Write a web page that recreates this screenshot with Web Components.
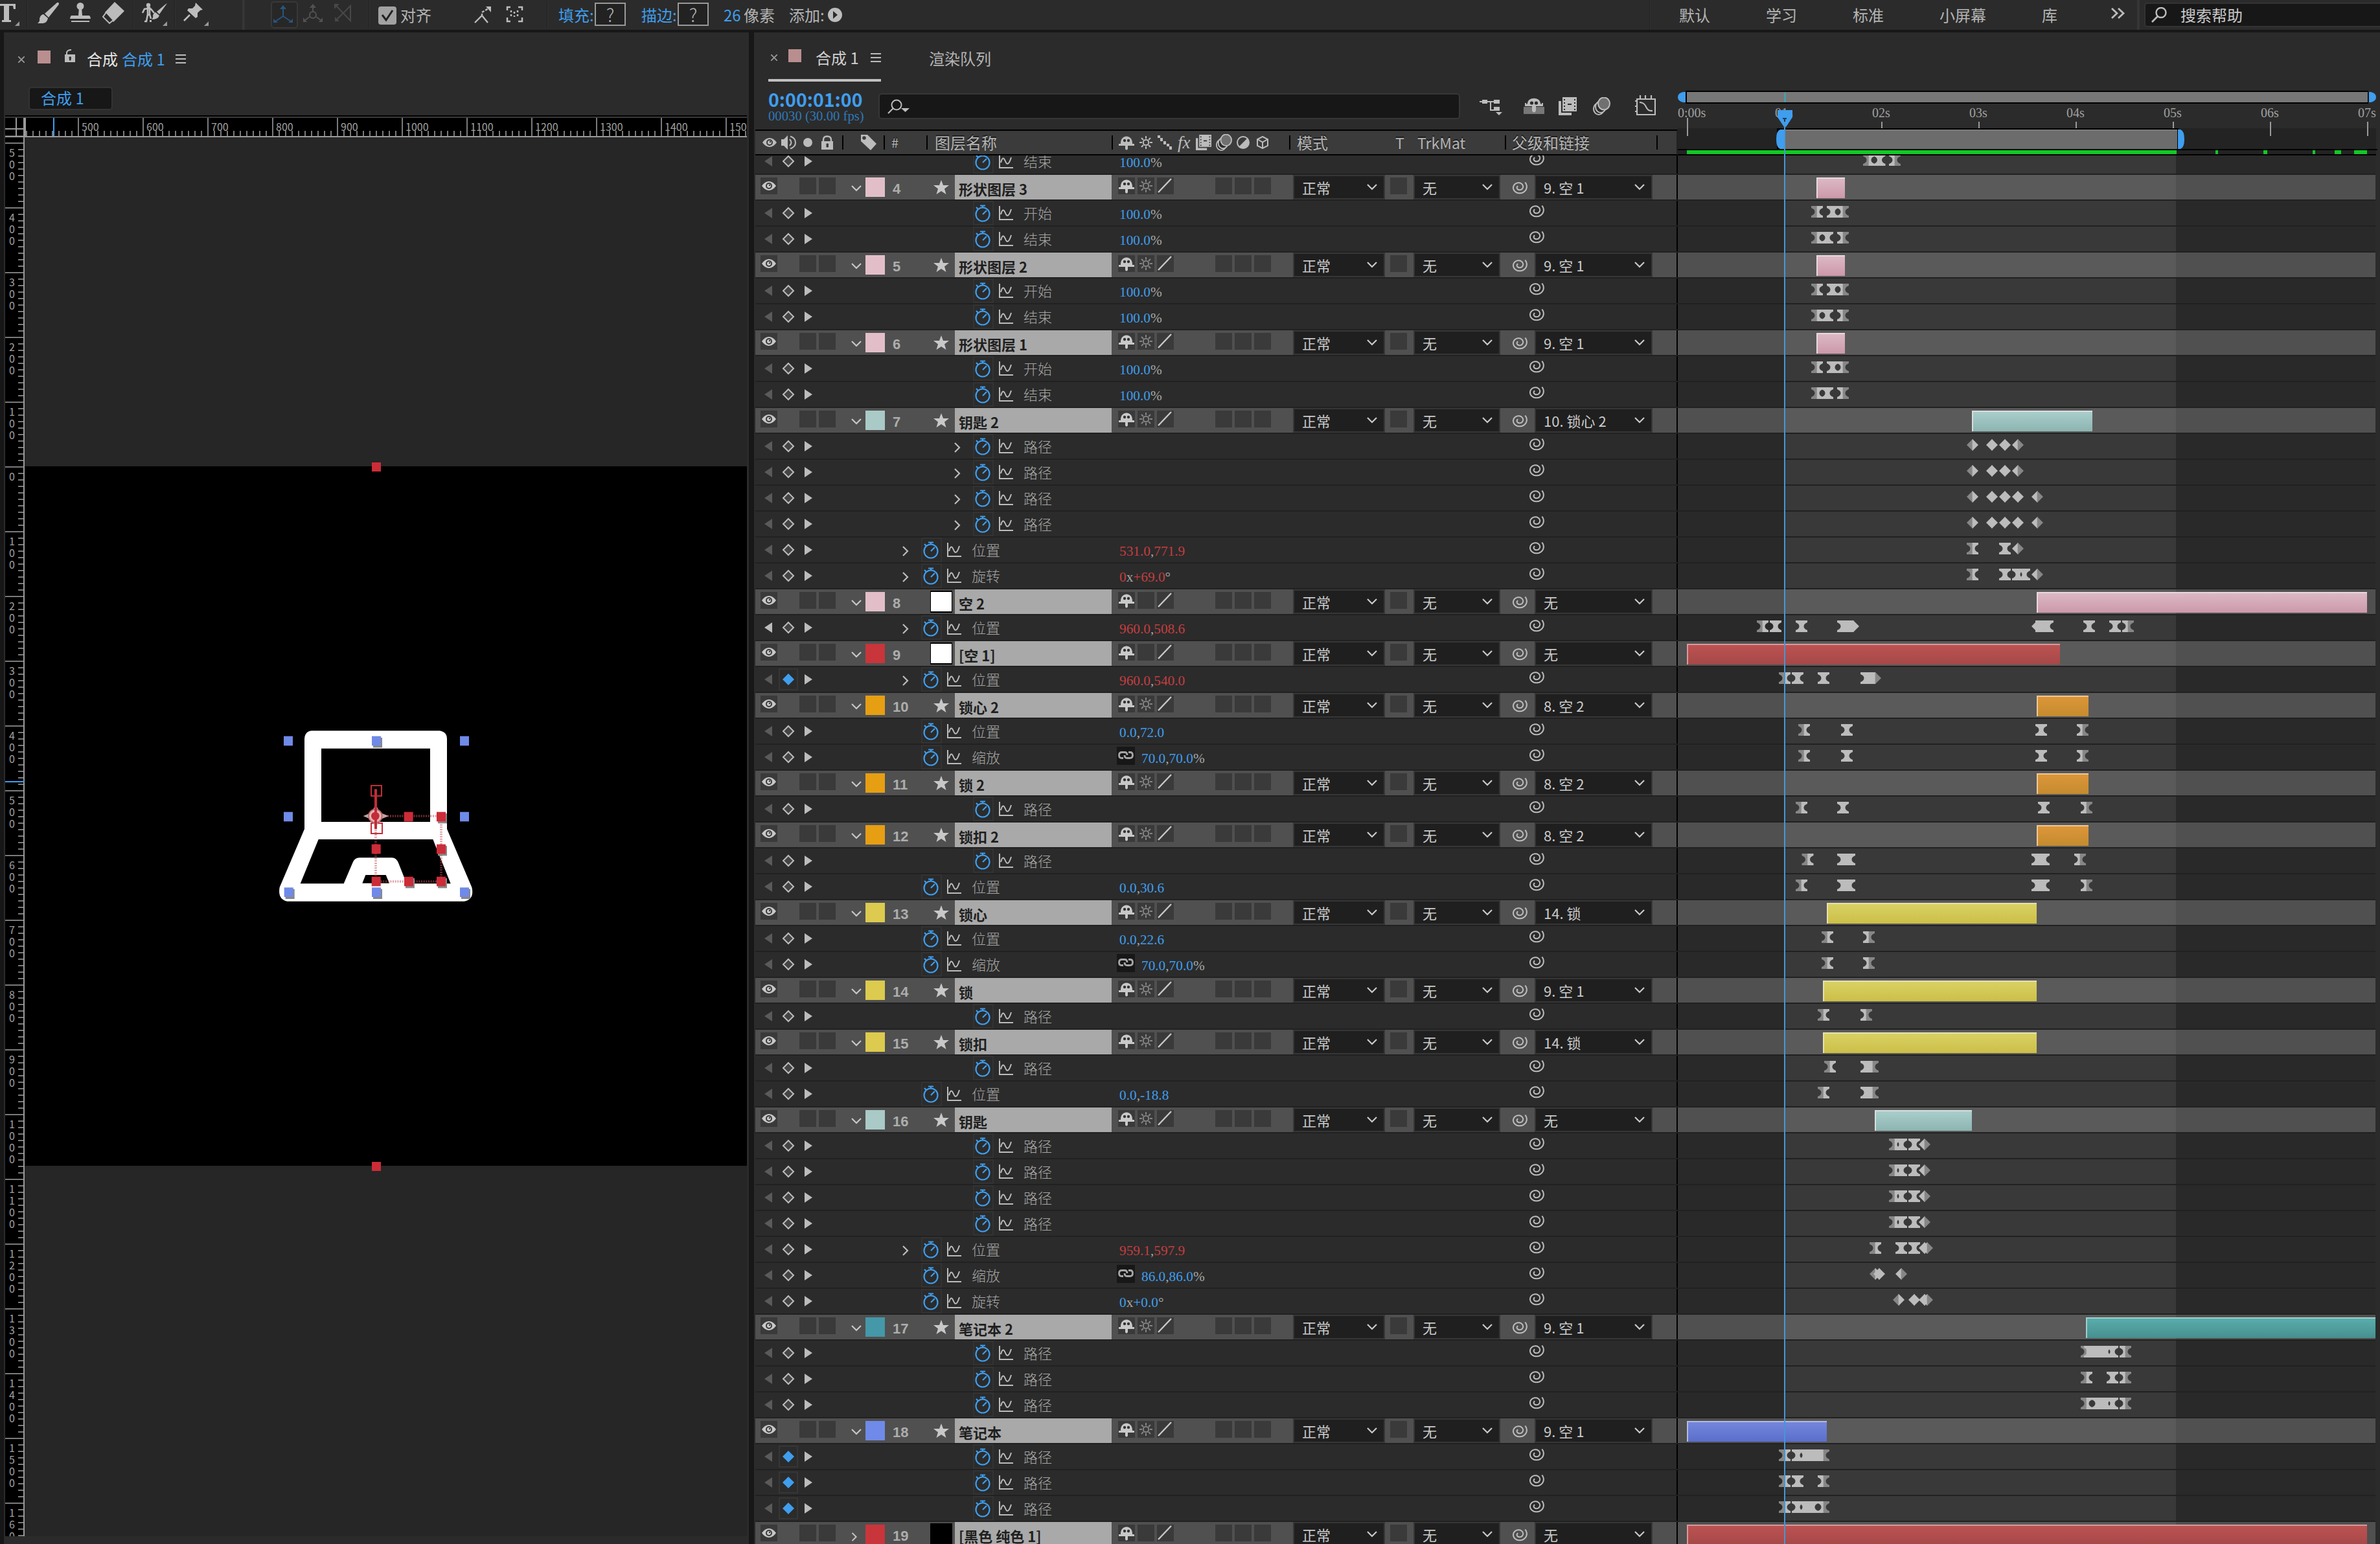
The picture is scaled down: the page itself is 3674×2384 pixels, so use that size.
<!DOCTYPE html>
<html lang="zh-CN">
<head>
<meta charset="utf-8">
<title>合成 1</title>
<style>
  html, body {
    margin: 0;
    height: 100%;
    overflow: hidden;
    background: #171717;
    font-family: "Noto Sans CJK SC", "Noto Sans", sans-serif;
    font-size: 24px;
    color: #b4b4b4;
  }
</style>
</head>
<body>
<ae-app></ae-app>

<script>
// Pick whip spiral, wound inwards from the top right
function spiral(cx, cy, r) {
  let d = '';
  for (let i = 0; i <= 42; i++) {
    const a = (-42 + i * 15) * Math.PI / 180;
    const k = r - (r - 2.5) * i / 42;
    d += (i ? 'L' : 'M') + (cx + k * Math.cos(a)).toFixed(1) + ' ' + (cy + k * .9 * Math.sin(a)).toFixed(1);
  }
  return `<path d="${d}" fill="none" stroke="#bcbcbc" stroke-width="2"/>`;
}

const SHY = `<path d="M3 13C3 -1 21 -1 21 13V14H24V17H14V22Q12 25 10 22V17H0V14H3Z"/><circle cx="9" cy="9" r="2.2" fill="#333"/><circle cx="15" cy="9" r="2.2" fill="#333"/>`;
const SUN = `<circle cx="10" cy="10" r="4.2" fill="none" stroke="currentColor" stroke-width="2"/><path d="M10 0V4M10 16V20M0 10H4M16 10H20M3 3L6 6M14 14L17 17M17 3L14 6M6 14L3 17" stroke="currentColor" stroke-width="2"/>`;
const FILM = `<path d="M0 6H4V24H20V28H0Z"/><path d="M6 0H28V22H6Z"/><path d="M9 3V20M25 3V20" stroke="#2b2b2b" stroke-width="2" stroke-dasharray="2 3"/><path d="M14 11H20" stroke="#2b2b2b" stroke-width="2"/>`;
const BLUR = `<g stroke="currentColor" stroke-width="2" fill="#2b2b2b"><ellipse cx="10" cy="18" rx="8" ry="9"/><ellipse cx="13" cy="15" rx="8" ry="9"/><ellipse cx="18" cy="10" rx="9" ry="9.5" fill="#707070"/></g>`;

// name: [x, y, width, height, markup]
const ICONS = {
  type: [0, 0, 31, 46, `<path d="M0 6H24V14H21L20 9H14V31H17V34H3V31H6V9H0Z"/><path d="M30 33V40H23Z" fill="#999"/>`],
  brush: [57, 0, 35, 46, `<path d="M90 4Q92 5 90 8L75 27L69 21L87 5Q89 3 90 4ZM67 22L74 28Q73 35 66 36H58Q62 33 61 29Q62 23 67 22Z"/>`],
  stamp: [107, 0, 34, 46, `<circle cx="124" cy="9.500" r="5.500"/><path d="M122 12H126L127 24H138Q140 26 140 29H108Q108 26 110 24H121ZM110 32H138V34H110Z"/>`],
  eraser: [157, 0, 36, 46, `<path d="M177 3L192 17L175 34L162 19Z"/><path d="M164 19L175 31L169 36L159 26Z" fill="#2b2b2b" stroke="currentColor" stroke-width="2"/>`],
  roto: [218, 0, 41, 46, `<circle cx="229" cy="8" r="3.200"/><path d="M229 13L233 14L238 20M229 13L223 14L220 20M228 12H231V23H228ZM228 22L226 33H223M231 22L233 29" fill="none" stroke="currentColor" stroke-width="2.600"/><path d="M231 31h3v3h-3z"/><path d="M258 5L246 22L242 18L255 7ZM240 19L246 24Q244 30 234 30Q237 27 236 24Q237 20 240 19Z"/><path d="M258 33V40H251Z" fill="#999"/>`],
  pin: [283, 0, 40, 46, `<path d="M302 4L313 15L309 16L305 20L305 26L302 28L289 16L291 13L297 13L301 9Z"/><path d="M293 23L284 32" stroke="currentColor" stroke-width="2.600"/><path d="M322 33V40H315Z" fill="#999"/>`],
  axisA: [418, 0, 42, 46, `<rect x="419" y="3" width="40" height="40" rx="4" fill="#272727" stroke="#383838" stroke-width="2"/><g fill="#28557d"><path d="M437 10V25L425 33M437 25L449 33" fill="none" stroke="#28557d" stroke-width="2"/><path d="M432 14L437 8L442 14ZM422 29L429 35H422ZM452 29L445 35H452Z"/></g>`],
  axisB: [467, 0, 32, 46, `<g fill="#525252"><path d="M483 10V18M478 26L471 31M488 26L495 31" stroke="#525252" stroke-width="2"/><circle cx="483" cy="23" r="5" fill="none" stroke="#525252" stroke-width="2"/><path d="M478 12L483 6L488 12ZM468 27L474 34H468ZM498 27L492 34H498Z"/></g>`],
  axisC: [515, 0, 29, 46, `<path d="M519 9L541 32V9L520 30" fill="none" stroke="#484848" stroke-width="2"/><path d="M516 6H524L516 14ZM517 26V33H524Z" fill="#484848"/>`],
  check: [584, 0, 28, 46, `<rect x="584" y="10" width="28" height="28" rx="4" fill="#a2a2a2"/><path d="M590 23L596 31L606 16" fill="none" stroke="#222" stroke-width="3"/>`],
  snap: [732, 0, 28, 46, `<path d="M733 35L744 24L753 35M744 24V21" fill="none" stroke="currentColor" stroke-width="2.400"/><path d="M744 19L754 13" stroke="currentColor" stroke-width="2.400" stroke-dasharray="4 2"/><path d="M750 10H758V19Z"/>`],
  bounds: [781, 0, 27, 46, `<path d="M783 16V11H788M800 11H806V16M806 27V33H800M788 33H783V27" fill="none" stroke="currentColor" stroke-width="2.500"/><path d="M789 16V28M794 18V26M799 16V28" stroke="currentColor" stroke-width="2.500" stroke-dasharray="3 3"/>`],
  play: [1277, 0, 24, 46, `<circle cx="1289" cy="23" r="11"/><path d="M1286 17L1293 23L1286 29Z" fill="#2b2b2b"/>`],
  more: [3258, 0, 24, 46, `<path d="M3260 13L3268 20.500L3260 28M3270 13L3278 20.500L3270 28" fill="none" stroke="currentColor" stroke-width="2.800"/>`],
  lens: [0, 0, 24, 24, `<circle cx="15" cy="8.500" r="7.500" fill="none" stroke="currentColor" stroke-width="2.400"/><path d="M10 14L1 23" stroke="currentColor" stroke-width="2.600"/>`],
  lensMenu: [0, 0, 34, 24, `<circle cx="14" cy="9" r="7.500" fill="none" stroke="currentColor" stroke-width="2"/><path d="M9 14L1 22" stroke="currentColor" stroke-width="2.200"/><path d="M21 14H34L27.500 20Z"/>`],
  close: [0, 0, 10, 10, `<path d="M0 0L10 10M10 0L0 10" stroke="#999" stroke-width="1.800"/>`],
  unlock: [0, 0, 16, 20, `<path d="M0 8H16V20H0Z"/><path d="M3 9V5Q4 1 10 1" fill="none" stroke="currentColor" stroke-width="2"/><path d="M7 12h2.400l-.4 5h-1.600z" stroke="#2b2b2b" fill="#2b2b2b"/>`],
  menu: [0, 0, 16, 16, `<path d="M0 2H16M0 8H16M0 14H16" stroke="currentColor" stroke-width="2.200"/>`],
  eye: [0, 0, 22, 14, `<path d="M0 7Q5 0 11 0Q17 0 22 7Q17 14 11 14Q5 14 0 7Z"/><circle cx="11" cy="7" r="5" fill="#3a3a3a"/><circle cx="11" cy="7" r="3"/><circle cx="12" cy="6" r="1.200" fill="#3a3a3a"/>`],
  sound: [0, 0, 24, 22, `<path d="M0 6H4L10 0V22L4 16H0Z"/><path d="M13 6Q18 11 13 16M14 1.500Q22 4 22 11Q22 18 14 20.500" fill="none" stroke="currentColor" stroke-width="2"/>`],
  dot: [0, 0, 14, 14, `<circle cx="7" cy="7" r="7"/>`],
  lock: [0, 0, 18, 22, `<path d="M0 9H18V22H0Z"/><path d="M3 10V7Q3 1.500 9 1.500T15 7V10" fill="none" stroke="currentColor" stroke-width="2.400"/><path d="M8 13h2.500v5h-2.500z" stroke="#3b3b3b" fill="#3b3b3b"/>`],
  tag: [0, 0, 24, 24, `<path d="M0 0H10L24 14L15 24L0 10Z"/><circle cx="5" cy="5" r="2.800" fill="#3b3b3b"/>`],
  shy: [0, 0, 24, 24, SHY],
  sun: [0, 0, 20, 20, SUN],
  steps: [0, 0, 22, 22, `<path d="M0 0h4v4h-4zM4 4h4v5h-4zM9 9h4v5h-4zM14 13h4v4h-4zM18 17h4v5h-4z"/>`],
  film: [0, 0, 28, 28, FILM],
  blur: [0, 0, 28, 28, BLUR],
  half: [0, 0, 20, 20, `<circle cx="10" cy="10" r="9" fill="none" stroke="currentColor" stroke-width="2"/><path d="M17 3A10 10 0 0 1 3 17Z"/>`],
  cube: [0, 0, 18, 20, `<path d="M9 1L17 5V15L9 19L1 15V5ZM1 5L9 9.500L17 5M9 9.500V19" fill="none" stroke="currentColor" stroke-width="2"/>`],
  flow: [0, 0, 36, 26, `<path d="M0 4H22M17 4V17H24" fill="none" stroke="currentColor" stroke-width="2"/><path d="M4 1h8v6h-8zM22 1h9v6h-9zM22 12h9v6h-9zM25 20h10l-5 5z"/>`],
  shyBig: [0, 0, 32, 26, `<path d="M0 14H32V25H0Z" fill="#777"/><path d="M6 9C6 -2 26 -2 26 9L28 10V8H30V13H19V20Q16 25 13 20V13H2V8H4V10Z"/><circle cx="12.500" cy="8" r="2.600" fill="#2b2b2b"/><circle cx="19.500" cy="8" r="2.600" fill="#2b2b2b"/>`],
  graphEd: [0, 0, 32, 31, `<path d="M3 6H31V30H3ZM8 0V5M16 0V5M25 0V5M0 9H3M0 17H3M0 25H3" fill="none" stroke="currentColor" stroke-width="2.200"/><path d="M7 11Q14 11 17 18T27 24" fill="none" stroke="currentColor" stroke-width="2"/>`],
  down: [0, 0, 16, 10, `<path d="M1 1L8 8L15 1" fill="none" stroke="currentColor" stroke-width="2.200"/>`],
  right: [0, 0, 10, 16, `<path d="M1 1L8 8L1 15" fill="none" stroke="currentColor" stroke-width="2.200"/>`],
  star: [0, 0, 24, 22, `<path d="M12 0L15 8H24L17 13.500L19.500 22L12 17L4.500 22L7 13.500L0 8H9Z"/>`],
  line: [0, 0, 26, 26, `<path d="M2 23L22 2" stroke="currentColor" stroke-width="2.400"/>`],
  whip: [0, 0, 26, 26, spiral(13, 13, 12.5)],
  link: [0, 0, 28, 28, `<path d="M0 0H28V28H0Z" fill="#171717"/><path d="M10 17.500H7.500Q3.500 17.500 3.500 13T8 8.500H12Q16 8.500 16 13M18 8.500H20.500Q24.500 8.500 24.500 13T20 17.500H16Q12 17.500 12 13" fill="none" stroke="currentColor" stroke-width="2.800"/>`],
  watch: [0, 0, 92, 38, `<rect x="31" y="1" width="30" height="36" fill="none" stroke="#333" stroke-width="2"/><g fill="none" stroke="#3f9eee" stroke-width="2.200"><circle cx="45" cy="21" r="10.500"/><path d="M45 21L51 15M41 7.500H49M45 7V11M35 10L38 13"/></g><path d="M71 8V29H92M73 21Q76 9 80 19T89 13" fill="none" stroke="currentColor" stroke-width="2"/>`]
};

function icon(name, w, h) {
  const [x, y, iw, ih, body] = ICONS[name];
  return `<svg width="${w || iw}" height="${h || ih}" viewBox="${x} ${y} ${iw} ${ih}" fill="currentColor">${body}</svg>`;
}

class AeIcon extends HTMLElement {
  connectedCallback() {
    this.attachShadow({ mode: 'open' }).innerHTML = `
      <style>
        :host { display: block; flex: none; color: #bcbcbc; }
        svg { display: block; }
      </style>
      ${icon(this.getAttribute('name'), this.getAttribute('w'), this.getAttribute('h'))}
    `;
  }
}
customElements.define('ae-icon', AeIcon);

class AeToolbar extends HTMLElement {
  constructor() {
    super();
    this.attachShadow({ mode: 'open' }).innerHTML = `
      <style>
        :host { display: flex; height: 46px; background: #2b2b2b; align-items: center; white-space: nowrap; line-height: 46px; }
        .sep { flex: none; width: 2px; height: 42px; background: #222; border-right: 1px solid #333; box-sizing: border-box; }
        .sep.tall { width: 4px; height: 46px; background: #363636; }
        .blue { color: #3f9eee; }
        .box { box-sizing: border-box; flex: none; width: 48px; height: 36px; border: 2px solid #999; background: #222; text-align: center; font-size: 28px; font-weight: 300; line-height: 32px; margin-top: -2px; }
        .search { box-sizing: border-box; flex: none; display: flex; align-items: center; height: 38px; width: 372px; background: #171717; border: 2px solid #333; border-radius: 5px; margin-left: 7px; color: #c8c8c8; line-height: 34px; }
        span { flex: none; }
      </style>
      <ae-icon name="type"></ae-icon>
      <i class="sep" style="margin-left:10px"></i>
      <ae-icon name="brush" style="margin-left:14px"></ae-icon>
      <ae-icon name="stamp" style="margin-left:15px"></ae-icon>
      <ae-icon name="eraser" style="margin-left:16px"></ae-icon>
      <i class="sep" style="margin-left:12px"></i>
      <ae-icon name="roto" style="margin-left:11px"></ae-icon>
      <i class="sep" style="margin-left:10px"></i>
      <ae-icon name="pin" style="margin-left:12px"></ae-icon>
      <i class="sep tall" style="margin-left:51px"></i>
      <ae-icon name="axisA" style="margin-left:40px"></ae-icon>
      <ae-icon name="axisB" style="margin-left:7px"></ae-icon>
      <ae-icon name="axisC" style="margin-left:16px"></ae-icon>
      <i class="sep" style="margin-left:25px"></i>
      <ae-icon name="check" style="margin-left:13px"></ae-icon>
      <span style="margin-left:6px; width:114px">对齐</span>
      <ae-icon name="snap"></ae-icon>
      <ae-icon name="bounds" style="margin-left:21px"></ae-icon>
      <i class="sep" style="margin-left:36px"></i>
      <span class="blue" style="margin-left:16px; width:56px">填充:</span>
      <div class="box">?</div>
      <span class="blue" style="margin-left:24px; width:56px">描边:</span>
      <div class="box">?</div>
      <span class="blue" style="margin-left:23px; width:31px">26</span>
      <span style="width:70px">像素</span>
      <span style="width:59px">添加:</span>
      <ae-icon name="play"></ae-icon>
      <i class="sep" style="margin-left:1245px; height:46px"></i>
      <span style="margin-left:44px">默认</span>
      <span style="margin-left:86px">学习</span>
      <span style="margin-left:86px">标准</span>
      <span style="margin-left:86px">小屏幕</span>
      <span style="margin-left:86px">库</span>
      <ae-icon name="more" style="margin-left:82px"></ae-icon>
      <i class="sep tall" style="margin-left:17px"></i>
      <div class="search">
        <ae-icon name="lens" style="margin-left:9px"></ae-icon>
        <span style="margin-left:21px">搜索帮助</span>
      </div>
    `;
  }
}
customElements.define('ae-toolbar', AeToolbar);

// Rulers and artwork of the composition panel
function hRuler() {
  let s = '';
  for (let i = -8; i < 104; i++) {
    const x = 121 + i * 10 - 8;
    s += i % 10 === 0 ? `<path d="M${x} 0V28"/>` : `<path d="M${x} 20V28"/>`;
  }
  for (let i = 0; i < 11; i++) s += `<text x="${118 + i * 100}" y="20">${500 + i * 100}</text>`;
  return s;
}

function vRuler() {
  let s = '';
  for (let i = 0; i < 216; i++) {
    const y = 9 + i * 10;
    s += i % 10 === 0 ? `<path d="M0 ${y}H30"/>` : `<path d="M20 ${y}H30"/>`;
    if (i % 10 === 0) {
      String(Math.abs(i * 10 - 500)).split('').slice(0, i === 210 ? 3 : 4).forEach((c, k) => {
        s += `<text x="6" y="${y + 21 + k * 18}">${c}</text>`;
      });
    }
  }
  return s;
}

class AeViewer extends HTMLElement {
  constructor() {
    super();
    const square = (x, y, c, s) => `${s ? `<path d="M${x - 15} ${y - 15}h42v46h-42z" fill="#888"/>` : ''}<path d="M${x - 21} ${y - 22}h42v44h-42z" fill="${c}"/>`;
    // third value marks handles that lie on the white artwork and cast a shadow
    const blue = [[135, 192], [543, 192, 1], [951, 192], [135, 543], [951, 543], [137, 893, 1], [543, 893, 1], [951, 893, 1]];
    const red = [[692, 543], [843, 543, 1], [542, 693], [843, 693, 1], [542, 843], [693, 843, 1], [843, 843, 1]];
    const mark = (p, c) => p.map(([x, y, s]) => square(x, y, c, s)).join('');
    this.attachShadow({ mode: 'open' }).innerHTML = `
      <style>
        :host { display: flex; flex-direction: column; box-sizing: border-box; width: 1150px; background: #2b2b2b; padding: 0 3px 12px 2px; overflow: hidden; white-space: nowrap; }
        .tab { display: flex; align-items: center; height: 82px; line-height: 82px; color: #e6e6e6; }
        .swatch { width: 20px; height: 20px; background: #b98e8f; margin: -6px 22px 0 20px; }
        .blue { color: #3f9eee; }
        .crumb { box-sizing: border-box; width: 130px; height: 36px; margin: 2px 0 8px 36px; padding-left: 17px; line-height: 29px; border: 2px solid #333; border-radius: 5px; background: #171717; }
        .rule { display: grid; grid-template-columns: 30px 1fr; grid-template-rows: 30px 1fr; border-top: 2px solid #000; flex: 1; min-height: 0; overflow: hidden; box-shadow: inset 0 2px #3a3a3a; padding-top: 2px; }
        svg { display: block; }
        .rule > svg { background: #000; }
        text { font-size: 16px; fill: #a0a0a0; stroke: none; }
        .stage { position: relative; background: #262626; overflow: hidden; }
        .comp { position: absolute; left: 0; right: 0; top: 508px; height: 1080px; background: #000; }
        .art { position: absolute; left: 362px; }
        .knob { position: absolute; left: 536px; width: 14px; height: 14px; background: #cc2c38; }
      </style>
      <div class="tab">
        <ae-icon name="close" style="margin-left:20px; margin-top:1px"></ae-icon>
        <div class="swatch"></div>
        <ae-icon name="unlock" style="margin-top:-10px"></ae-icon>
        <span style="margin-left:18px">合成</span>
        <span class="blue" style="margin-left:6px">合成 1</span>
        <ae-icon name="menu" style="margin-left:16px"></ae-icon>
      </div>
      <div class="crumb blue">合成 1</div>
      <div class="rule">
        <svg width="30" height="30" stroke="#9a9a9a" stroke-width="2" fill="none"><path d="M17 0V30M0 17H30"/><path d="M30 0V30M0 29.500H30" stroke-width="4"/></svg>
        <svg width="1115" height="30" viewBox="30 0 1115 30" stroke="#9a9a9a" stroke-width="1.600">${hRuler()}<path d="M30 29H1150" stroke-width="2"/><path d="M30 0V29" stroke-width="4"/><path d="M75 0V28" stroke="#3f9eee" stroke-width="2"/></svg>
        <svg width="30" height="2160" stroke="#9a9a9a" stroke-width="1.600">${vRuler()}<path d="M29 0V2160" stroke-width="2"/><path d="M0 995H30" stroke="#3f9eee" stroke-width="2"/></svg>
        <div class="stage">
          <div class="comp"></div>
          <i class="knob" style="top:502px"></i>
          <i class="knob" style="top:1582px"></i>
          <svg class="art" style="top:868px" width="360" height="340" viewBox="0 0 1080 1020">
            <path fill="#fff" fill-rule="evenodd" d="M245 145H835Q870 150 870 183V600L985 870Q998 925 950 935H130Q85 925 95 870L210 600V183Q212 147 245 145ZM288 227V567H792V227ZM275 648L191 853H392L433 757Q442 733 465 733H615Q635 733 645 757L683 853H887L805 648ZM493 813L478 851H603L587 813Z"/>
            <path d="M540 540H843V843H540V600" fill="none" stroke="#c4505c" stroke-opacity=".55" stroke-width="11" stroke-dasharray="6 5"/>
            ${mark(blue, '#6f8ae8')}${mark(red, '#cc2c38')}
            <g fill="none" stroke="#c22c38" stroke-width="6"><path d="M519 399H567V447H519ZM519 573H570V621H519Z"/></g>
            <path d="M540 485L552 510L570 528L600 540L570 552L552 570L540 595L528 570L510 552L482 540L510 528L528 510Z" fill="#c9a0a0"/>
            <circle cx="538" cy="540" r="31" fill="#e6b4b0" stroke="#b9656a" stroke-width="5"/>
            <circle cx="538" cy="540" r="19" fill="#c22c38"/>
            <path d="M540 415V600" stroke="#c22c38" stroke-width="12"/>
          </svg>
        </div>
      </div>
    `;
  }
}
customElements.define('ae-viewer', AeViewer);

const COLORS = {
  pink: ['#e2bfc8', '#dcb8c4', '#cc98aa', '#e6dadd'],
  mint: ['#a9cac7', '#a9cecb', '#8cb4b0', '#d8dedd'],
  red: ['#c8353b', '#bd5252', '#a54848', '#d99a9a'],
  orange: ['#e69e13', '#dc9639', '#c48b2f', '#efc896'],
  yellow: ['#dccb4e', '#d9d164', '#ccbf48', '#e6e0b0'],
  teal: ['#4498a8', '#5aacac', '#478f8f', '#a0cfcf'],
  blue: ['#6f8ae8', '#7486dc', '#5a6ecb', '#b4bcdc'],
  black: ['#c8353b', '#bd5252', '#a54848', '#d99a9a']
};

const FRAME = 5;
const ZERO = 15;

const HALF = {
  h: 'M-.3 -9H9V-6Q3.500 -4 3.500 0T9 6V9H-.3Z',
  d: 'M-.3 -9L0 -9L9 0L0 9H-.3Z',
  f: 'M-.3 -9H9V9H-.3Z'
};
const KINDS = { h: ['h', 'h'], d: ['d', 'd'], r: ['f', 'd'], l: ['d', 'f'] };

// "48h 51r": frame number followed by the keyframe kind
function keys(spec) {
  const list = spec.split(' ');
  return list.map((k, i) => {
    const x = ZERO + parseFloat(k) * FRAME;
    const [l, r] = KINDS[k.slice(-1)];
    const lc = i === 0 ? '#868686' : '#bcbcbc';
    const rc = i === list.length - 1 ? '#868686' : '#bcbcbc';
    return `<g transform="translate(${x} 17)"><path transform="scale(-1 1)" d="${HALF[l]}" fill="${lc}"/><path d="${HALF[r]}" fill="${rc}"/></g>`;
  }).join('');
}

const ROW_STYLE = `
  :host { display: flex; height: 38px; margin-bottom: 2px; white-space: nowrap; }
  svg { display: block; flex: none; }
  .left { display: flex; flex: none; width: 1422px; border-right: 2px solid #000; }
  .track { position: relative; flex: none; width: 1077px; background: linear-gradient(90deg, var(--out) 165px, var(--in) 165px, var(--in) 769px, var(--out) 769px); overflow: hidden; }
`;

class AeLayer extends HTMLElement {
  connectedCallback() {
    const [color, num, name, parent, from, to, type] = this.data;
    const c = COLORS[color];
    const thumb = type ? `<div class="thumb" style="background:${type}"></div>` : `<div class="thumb none">${icon('star')}</div>`;
    this.attachShadow({ mode: 'open' }).innerHTML = `
      <style>
        ${ROW_STYLE}
        :host { --out: #505050; --in: #5a5a5a; color: #c8c8c8; }
        .left { background: #505050; }
        .sw { flex: none; width: 26px; height: 26px; margin: 4px 0 0 4px; background: #3a3a3a; display: flex; align-items: center; justify-content: center; }
        .twirl { width: 16px; margin: 16px 6px 0 24px; }
        .swatch { flex: none; width: 30px; height: 30px; margin-top: 4px; }
        .num { flex: none; width: 58px; padding-left: 12px; font: bold 22px/44px "Liberation Sans", sans-serif; color: #adadad; box-sizing: border-box; margin-right: 12px; }
        .thumb { box-sizing: border-box; flex: none; width: 34px; height: 34px; margin: 2px 4px 0 0; border: solid #000; border-width: 2px 1px; }
        .thumb.none { border: 0; padding: 6px 0 0 5px; }
        .name { flex: none; box-sizing: border-box; width: 242px; padding-left: 6px; background: #a9a9a9; color: #1f1f1f; font-weight: 700; font-size: 22px; line-height: 42px; }
        .drop { box-sizing: border-box; flex: none; display: flex; align-items: center; justify-content: space-between; background: #1f1f1f; border: 2px solid #363636; padding: 0 10px 0 12px; line-height: 34px; font-size: 22px; color: #cacaca; }
        .bar { box-sizing: border-box; position: absolute; top: 4px; height: 32px; border-left: 2px solid; border-top: 2px solid; }
      </style>
      <div class="left">
        <div class="sw" style="margin-left:8px">${icon('eye')}</div>
        <div class="sw" style="margin-left:34px"></div>
        <div class="sw"></div>
        <div class="twirl">${num === 19 ? icon('right', 10, 14) : icon('down')}</div>
        <div class="swatch" style="background:${c[0]}"></div>
        <div class="num">${num}</div>
        ${thumb}
        <div class="name">${name}</div>
        <div class="sw" style="margin-left:10px">${icon('shy', 24, 24)}</div>
        <div class="sw" style="color:#858585">${type ? '' : icon('sun')}</div>
        <div class="sw">${icon('line')}</div>
        <div class="sw" style="margin-left:64px"></div>
        <div class="sw"></div>
        <div class="sw"></div>
        <div class="drop" style="margin-left:34px; width:142px">正常${icon('down')}</div>
        <div class="sw" style="margin-left:8px"></div>
        <div class="drop" style="margin-left:10px; width:134px">无${icon('down')}</div>
        <div style="margin:6px 11px 0 16px">${icon('whip')}</div>
        <div class="drop" style="width:182px">${parent}${icon('down')}</div>
      </div>
      <div class="track">
        <div class="bar" style="left:${ZERO - 1 + from * FRAME}px; width:${(to - from) * FRAME}px; background:linear-gradient(${c[1]}, ${c[2]}); border-color:${c[3]}"></div>
      </div>
    `;
  }
}
customElements.define('ae-layer', AeLayer);

class AeProp extends HTMLElement {
  connectedCallback() {
    // flags: d = nested, t = twirl, k = keyed at current time, p = has previous key, c = linked dimensions, x = expression
    const [label, value, flags, spec] = this.data;
    const has = f => flags.includes(f);
    const text = value.replace(/[\d.+-]+/g, '<b>$&</b>');
    this.attachShadow({ mode: 'open' }).innerHTML = `
      <style>
        ${ROW_STYLE}
        :host { --out: #292929; --in: #393939; color: #bcbcbc; }
        .left { background: #2b2b2b; }
        .group { display: flex; flex: none; width: 92px; position: relative; margin-left: ${has('d') ? 206 : 126}px; }
        .twirl { position: absolute; left: 1px; top: 13px; }
        .label { flex: none; width: ${has('d') ? 148 : 228}px; margin-left: 16px; font-size: 22px; font-weight: 300; line-height: 36px; color: #a6a6a6; }
        .value { flex: none; display: flex; width: 630px; font: 21.300px/43px "Liberation Serif", serif; color: #a6a6a6; }
        b { font-weight: 400; color: ${has('x') ? '#c53e40' : '#3f9eee'}; }
        .chain { width: 38px; margin: 3px 0 0 -4px; }
      </style>
      <div class="left">
        <svg width="100" height="38">
          <path d="M26 11V27L14 19Z" fill="${has('p') ? '#bcbcbc' : '#5a5a5a'}"/>
          ${has('k')
            ? '<rect x="37" y="3" width="28" height="32" fill="none" stroke="#363636" stroke-width="2"/><path d="M51 10L60 19L51 28L42 19Z" fill="#3f9eee"/>'
            : '<path d="M51 11L59 19L51 27L43 19Z" fill="#444" stroke="#bcbcbc" stroke-width="2"/>'}
          <path d="M76 11V27L88 19Z" fill="#bcbcbc"/>
        </svg>
        <div class="group">${has('t') ? `<div class="twirl">${icon('right')}</div>` : ''}${icon('watch')}</div>
        <div class="label">${label}</div>
        <div class="value">${has('c') ? `<div class="chain">${icon('link')}</div>` : ''}<span>${text}</span></div>
        <div style="margin-top:2px">${icon('whip')}</div>
      </div>
      <div class="track"><svg width="1077" height="38">${keys(spec)}</svg></div>
    `;
  }
}
customElements.define('ae-prop', AeProp);

const K16 = '64h 66h 70h 73.2d';
const K7A = '88d 94d 98d 102d';
const K7B = '88d 94d 98d 102d 108d';
const RUN = '123.2h 124.2h 125.2h 126.2h 127.2h 128.2h 129.2h 131.2h 135.2h';
const ROWS = [
  ['结束', '100.0%', 'd', '56h 59.3h 64h'],
  ['pink', 4, '形状图层 3', '9. 空 1', 40, 48.8],
  ['开始', '100.0%', 'd', '40h 44.8h 48h'],
  ['结束', '100.0%', 'd', '40h 43.2h 48h'],
  ['pink', 5, '形状图层 2', '9. 空 1', 40, 48.8],
  ['开始', '100.0%', 'd', '40h 44.8h 48h'],
  ['结束', '100.0%', 'd', '40h 43.2h 48h'],
  ['pink', 6, '形状图层 1', '9. 空 1', 40, 48.8],
  ['开始', '100.0%', 'd', '40h 44.8h 48h'],
  ['结束', '100.0%', 'd', '40h 43.2h 48h'],
  ['mint', 7, '钥匙 2', '10. 锁心 2', 88, 125.2],
  ['路径', '', 'dt', K7A],
  ['路径', '', 'dt', K7A],
  ['路径', '', 'dt', K7B],
  ['路径', '', 'dt', K7B],
  ['位置', '531.0,771.9', 'tx', '88h 98h 102d'],
  ['旋转', '0x+69.0°', 'tx', '88h 98h 102h 104h 108d'],
  ['pink', 8, '空 2', '无', 108, 210, '#fff'],
  ['位置', '960.0,508.6', 'txp', '23.2h 27.2h 35.2h 48h 49h 51.2r 108l 109.2r 111.2h 124h 132h 136h'],
  ['red', 9, '[空 1]', '无', 0, 115.2, '#fff'],
  ['位置', '960.0,540.0', 'txk', '30h 34h 42h 55.2h 56.2h 58r'],
  ['orange', 10, '锁心 2', '8. 空 2', 108, 124],
  ['位置', '0.0,72.0', '', '36h 49.2h 109.2h 122h'],
  ['缩放', '70.0,70.0%', 'c', '36h 49.2h 109.2h 122h'],
  ['orange', 11, '锁 2', '8. 空 2', 108, 124],
  ['路径', '', 'd', '35.2h 48h 110h 123.2h'],
  ['orange', 12, '锁扣 2', '8. 空 2', 108, 124],
  ['路径', '', 'd', '37.1h 48h 49h 50h 108h 109h 110h 121.2h'],
  ['位置', '0.0,30.6', '', '35.2h 48h 49h 50h 108h 109h 110h 123.2h'],
  ['yellow', 13, '锁心', '14. 锁', 43.2, 108],
  ['位置', '0.0,22.6', '', '43.2h 56h'],
  ['缩放', '70.0,70.0%', 'c', '43.2h 56h'],
  ['yellow', 14, '锁', '9. 空 1', 42, 108],
  ['路径', '', 'd', '42h 55.2h'],
  ['yellow', 15, '锁扣', '14. 锁', 42, 108],
  ['路径', '', 'd', '44h 55.2h 56.2h 57.2h'],
  ['位置', '0.0,-18.8', '', '42h 55.2h 56.2h 57.2h'],
  ['mint', 16, '钥匙', '无', 58, 88],
  ['路径', '', 'd', K16],
  ['路径', '', 'd', K16],
  ['路径', '', 'd', K16],
  ['路径', '', 'd', K16],
  ['位置', '959.1,597.9', 'tx', '58h 66h 70h 73.2d 74d'],
  ['缩放', '86.0,86.0%', 'c', '58d 59.2d 66d'],
  ['旋转', '0x+0.0°', '', '65.2d 70d 73.2d 74d'],
  ['teal', 17, '笔记本 2', '9. 空 1', 123.2, 230],
  ['路径', '', 'd', RUN],
  ['路径', '', 'd', '123.2h 131.2h 135.2h'],
  ['路径', '', 'd', '123.2h 126.6h 127.2h 128.2h 129.2h 131.2h 135.2h'],
  ['blue', 18, '笔记本', '9. 空 1', 0, 43.2],
  ['路径', '', 'dk', '30h 34h 36.200h 37.2h 38.2h 39.2h 40.2h 41.2h 42h'],
  ['路径', '', 'dk', '30h 34h 42h'],
  ['路径', '', 'dk', '30h 34h 36.200h 37.2h 38.2h 38.6h 42h'],
  ['black', 19, '[黑色 纯色 1]', '无', 0, 210, '#000']
];

class AeTimeline extends HTMLElement {
  constructor() {
    super();
    let ruler = '';
    for (let s = 0; s < 8; s++) {
      const x = 15 + s * 150;
      ruler += `<path d="M${x} ${s ? 28 : 22}V50" stroke="#9a9a9a" stroke-width="2"/>`;
      ruler += s ? `<text x="${x - 15}" y="21">0${s}s</text>` : '<text x="0" y="21">0:00s</text>';
    }
    this.attachShadow({ mode: 'open' }).innerHTML = `
      <style>
        :host { display: flex; flex-direction: column; box-sizing: border-box; flex: 1; min-width: 0; margin-left: 8px; background: #2b2b2b; padding-left: 2px; white-space: nowrap; overflow: hidden; }
        svg { display: block; }
        .tabs { display: flex; height: 76px; align-items: center; line-height: 76px; }
        .active { display: flex; align-items: center; box-sizing: border-box; width: 174px; height: 76px; margin-left: 20px; padding-top: 6px; border-bottom: 4px solid #c0c0c0; color: #d0d0d0; }
        .swatch { width: 20px; height: 20px; background: #b98e8f; margin: -6px 22px 0 20px; }
        .head { display: flex; height: 114px; }
        .cols { width: 1424px; flex: none; display: flex; flex-direction: column; }
        .info { display: flex; height: 74px; }
        .time { width: 170px; margin-left: 20px; color: #3f9eee; }
        .big { font-size: 28.500px; font-weight: 700; line-height: 32px; margin-top: 11px; height: 29px; }
        .small { font: 20.700px/26px "Liberation Serif", serif; color: #2f78b8; }
        .search { box-sizing: border-box; width: 898px; height: 40px; margin-top: 18px; padding: 7px 0 0 12px; border: 2px solid #363636; border-radius: 5px; background: #171717; }
        .names { box-sizing: border-box; display: flex; align-items: center; height: 40px; border-top: 2px solid #000; border-bottom: 2px solid #000; background: #3b3b3b; line-height: 36px; text-shadow: 0 -2px #1c1c1c; border-right: 2px solid #222; }
        .names > * { flex: none; }
        .names i { width: 2px; height: 22px; background: #000; }
        .names .fx { font: italic 27px/30px "Liberation Serif", serif; width: 28px; color: #bcbcbc; text-shadow: none; }
        .scale { position: relative; flex: none; width: 1080px; }
        .scale text { font: 20px "Liberation Serif", serif; fill: #a0a0a0; }
        .list { position: relative; flex: 1; min-height: 0; overflow: hidden; background: #212121; width: 2501px; }
        .rows { margin-top: -10px; }
        .needle { position: absolute; left: 1588px; top: 0; bottom: 0; width: 2px; background: #4596d6; }
      </style>
      <div class="tabs">
        <div class="active">
          <ae-icon name="close" style="margin-left:4px"></ae-icon>
          <div class="swatch" style="margin-left:17px"></div>
          合成 1
          <ae-icon name="menu" style="margin-left:auto"></ae-icon>
        </div>
        <span style="margin-left:74px; padding-top:3px">渲染队列</span>
      </div>
      <div class="head">
        <div class="cols">
          <div class="info">
            <div class="time">
              <div class="big">0:00:01:00</div>
              <div class="small">00030 (30.00 fps)</div>
            </div>
            <div class="search"><ae-icon name="lensMenu"></ae-icon></div>
            <ae-icon name="flow" style="margin:27px 0 0 30px"></ae-icon>
            <ae-icon name="shyBig" style="margin:25px 0 0 32px"></ae-icon>
            <ae-icon name="film" style="margin:24px 0 0 22px"></ae-icon>
            <ae-icon name="blur" style="margin:24px 0 0 24px"></ae-icon>
            <ae-icon name="graphEd" style="margin:21px 0 0 38px"></ae-icon>
          </div>
          <div class="names">
            <ae-icon name="eye" style="margin-left:11px"></ae-icon>
            <ae-icon name="sound" style="margin-left:7px"></ae-icon>
            <ae-icon name="dot" style="margin-left:10px"></ae-icon>
            <ae-icon name="lock" style="margin-left:14px"></ae-icon>
            <i style="margin-left:14px"></i>
            <ae-icon name="tag" style="margin-left:27px"></ae-icon>
            <i style="margin-left:11px"></i>
            <span style="margin-left:10px; width:54px; font-size:20px">#</span>
            <i></i>
            <span style="margin-left:11px; width:273px">图层名称</span>
            <i></i>
            <ae-icon name="shy" style="margin-left:9px"></ae-icon>
            <ae-icon name="sun" style="margin-left:8px"></ae-icon>
            <ae-icon name="steps" style="margin-left:8px"></ae-icon>
            <span class="fx" style="margin-left:9px">fx</span>
            <ae-icon name="film" w="24" h="24"></ae-icon>
            <ae-icon name="blur" w="26" h="26" style="margin-left:6px"></ae-icon>
            <ae-icon name="half" style="margin-left:7px"></ae-icon>
            <ae-icon name="cube" style="margin-left:11px"></ae-icon>
            <i style="margin-left:32px"></i>
            <span style="margin-left:10px; width:152px">模式</span>
            <span style="width:34px; font-size:23px">T</span>
            <span style="width:135px; font-size:23px">TrkMat</span>
            <i></i>
            <span style="margin-left:9px; width:223px">父级和链接</span>
            <i></i>
          </div>
        </div>
        <div class="scale">
          <svg width="1080" height="114" viewBox="0 126 1080 114">
            <rect x="0" y="198" width="1078" height="42" fill="#232323"/>
            <rect x="12" y="140" width="1054" height="20" fill="#000"/>
            <rect x="14" y="142" width="1051" height="16" fill="#777"/>
            <path d="M12 142V158H8Q0 156 0 150T8 142ZM1067 142V158H1070Q1078 156 1078 150T1070 142Z" fill="#3f9eee"/>
            <rect x="164" y="143" width="3" height="15" fill="#4f9aa8"/>
            <g transform="translate(0 160)">${ruler}</g>
            <rect x="153" y="198" width="620" height="34" fill="#000"/>
            <rect x="153" y="230" width="927" height="2" fill="#000"/>
            <rect x="0" y="230" width="160" height="2" fill="#000"/>
            <rect x="166" y="200" width="605" height="30" fill="#6c6c6c"/>
            <rect x="166" y="200" width="605" height="2" fill="#7a7a7a"/>
            <path d="M164 200V230H158Q152 228 152 215T158 200ZM772 200V230H776Q782 228 782 215T776 200Z" fill="#3f9eee"/>
            <path d="M14 232h756v6h-756zM830 232h4v6h-4zM904 232h6v6h-6zM980 232h4v6h-4zM1014 232h10v6h-10zM1044 232h20v6h-20z" fill="#12c926"/>
            <rect x="0" y="238" width="1078" height="2" fill="#000"/>
            <path d="M154 170H177V181L167 196H164L154 181Z" fill="#3f9eee"/>
            <path d="M162 183H168M165 183V188" stroke="#1f3a58" stroke-width="2"/>
            <rect x="164" y="189" width="2" height="51" fill="#4596d6"/>
          </svg>
        </div>
      </div>
      <div class="list">
        <div class="rows"></div>
        <div class="needle"></div>
      </div>
    `;
    const rows = this.shadowRoot.querySelector('.rows');
    ROWS.forEach(data => {
      const row = document.createElement(typeof data[1] === 'number' ? 'ae-layer' : 'ae-prop');
      row.data = data;
      rows.appendChild(row);
    });
  }
}
customElements.define('ae-timeline', AeTimeline);

class AeApp extends HTMLElement {
  constructor() {
    super();
    this.attachShadow({ mode: 'open' }).innerHTML = `
      <style>
        :host { display: grid; grid-template-rows: 46px 1fr; row-gap: 4px; width: 3674px; height: 2384px; background: #171717; overflow: hidden; }
        main { display: flex; padding-left: 6px; min-height: 0; }
        ae-viewer { flex: none; }
      </style>
      <ae-toolbar></ae-toolbar>
      <main>
        <ae-viewer></ae-viewer>
        <ae-timeline></ae-timeline>
      </main>
    `;
  }
}
customElements.define('ae-app', AeApp);
</script>
</body>
</html>
